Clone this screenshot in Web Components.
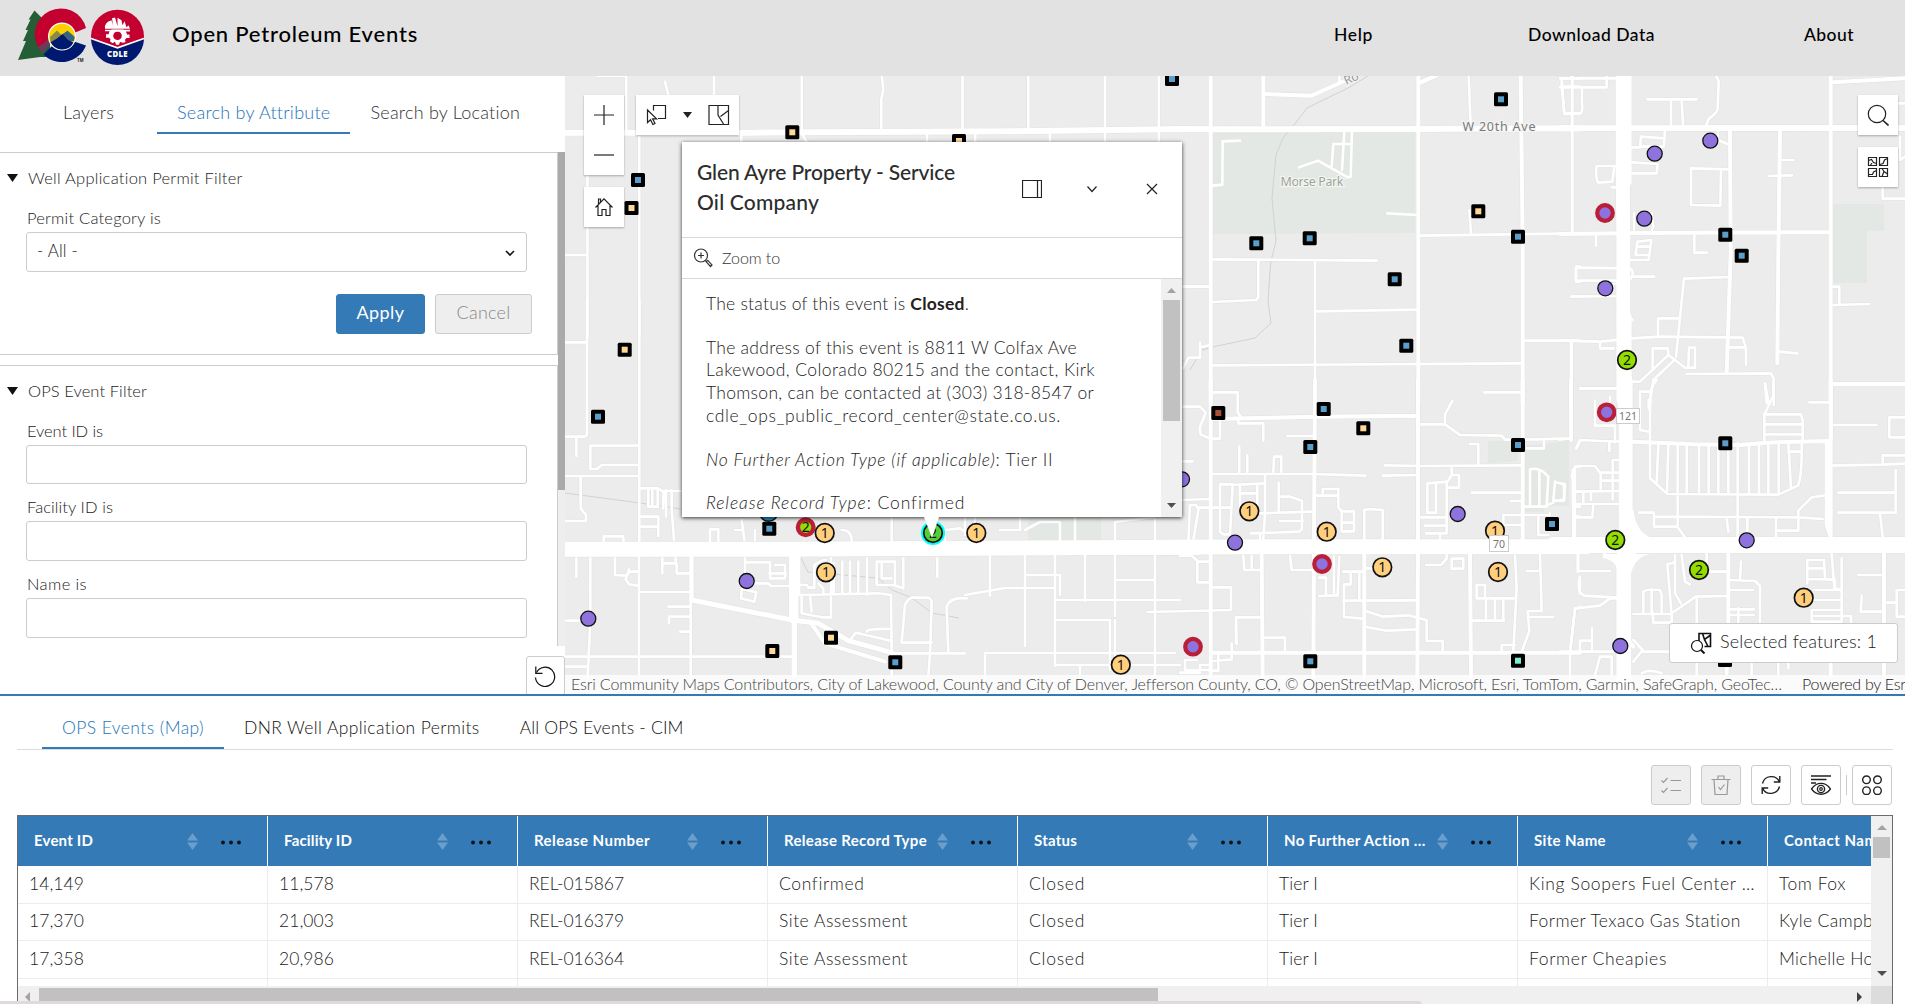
<!DOCTYPE html>
<html lang="en">
<head>
<meta charset="utf-8">
<title>Open Petroleum Events</title>
<style>
html,body{margin:0;height:100%;overflow:hidden;background:#fff}
body{font-family:Lato,"Open Sans","Liberation Sans",sans-serif;font-size:16px;color:#222;font-weight:300}
</style>
</head>
<body>
<ope-app></ope-app>
<script>
const make = (name, html, after) => customElements.define(name, class extends HTMLElement {
  connectedCallback() {
    if (this.shadowRoot) return;
    const root = this.attachShadow({mode: 'open'});
    root.innerHTML = typeof html === 'function' ? html(this) : html;
    if (after) after(this, root);
  }
});

/* Single line of text whose tracking is set so that it spans a given width. */
make('fit-text', `<style>:host{display:inline-block;white-space:nowrap}</style><span><slot></slot></span>`, (el, root) => {
  const w = +el.getAttribute('w');
  const n = el.textContent.length;
  if (w) el.style.letterSpacing = ((w - root.querySelector('span').getBoundingClientRect().width) / n).toFixed(3) + 'px';
});

make('ui-icon', el => {
  const S = {
    plus: [24, '<path d="M12 2v20M2 12h20"/>'],
    minus: [24, '<path d="M2 12h20"/>'],
    home: [20, '<path d="M1.500 10.500 10 1.800l8.500 8.700M4 8.500v10h4v-6h4v6h4v-10M4.500 7.500v-5.500h2v3.200"/>'],
    pick: [22, '<path d="M8.500 6.500v-5h12v13h-7.500M2.500 6v12.500l3-2.800 2.400 4.800 2.100-1.100-2.400-4.600h4z"/>'],
    mapsel: [22, '<path d="M1 1.500h19.500v19H1zM10 1.500v9.500l5.500 9M12.500 12.500l8-6"/>'],
    dock: [20, '<path d="M.500 1.500h19v17h-19zM15.500 1.500v17"/>'],
    chev: [12, '<path d="M1.500 3.500 6 8.500l4.500-5"/>'],
    close: [12, '<path d="M1 1l10 10M11 1 1 11"/>'],
    zoom: [20, '<circle cx="8" cy="7.500" r="6.500"/><path d="M8 4.500v6M5 7.500h6M12 12.500l1.500 1M13.200 13.800l1.500-1.500 4.300 4.600-1.500 1.600z"/>'],
    search: [22, '<circle cx="10" cy="10" r="8.700"/><path d="M16 16.500l5.500 5" stroke-width="1.600"/>'],
    base: [22, '<path d="M1.500 1.500h8v8h-8zM12.500 1.500h8v8h-8zM1.500 12.500h8v8h-8zM12.500 12.500h8v8h-8z"/><path d="M1.500 4.500l3-1 2 3 3 1M5 7l-1.500 2M13 8.500l3-1 1.500-3.500 3-1.500M2 18.500h3.500l1-2.500 3-1.500M15 12.500l2 3-2 5M17 15.500l3.500 2.500"/>'],
    reset: [22, '<path d="M2.500 7.500A9.600 9.600 0 1 1 1.500 12.500"/><path d="M1.800 1.500v6.800h6.700" />'],
    feat: [22, '<path d="M9 9V1.500h11.500v13h-6M12.500 1.500l2 6 5.500-4M14.500 7.500l3.500 7" stroke-width="1.600"/><circle cx="7" cy="14" r="5.500" fill="#fff"/><path d="M11 18l3.500 3.500" stroke-width="2"/>'],
    list: [20, '<path d="M.500 5.500l2 2 4-4.500M.500 15.500l2 2 4-4.500M9.500 5.500H20M9.500 15.500H20"/>'],
    trash: [20, '<path d="M.500 4.500h19M7 4V1h6v3M3 4.500 4 19.500h12l1-15M7.500 12l2 2.500 4-5"/>'],
    refresh: [20, '<path d="M18.500 7A9 9 0 0 0 1.500 8.500M1.500 13A9 9 0 0 0 18.500 11.500M18.800 1v6h-6M1.200 19v-6h6" stroke-width="1.400"/>'],
    eye: [20, '<path d="M0 1h20M0 4.500h15.500M0 8h5" stroke-width="1.500"/><path d="M.500 14c5-7.500 14-7.500 19 0-5 7-14 7-19 0z" stroke-width="1.400"/><circle cx="10" cy="14" r="3.600" stroke-width="1.400"/><circle cx="10" cy="14" r="1.300"/>'],
    dots4: [20, '<g stroke-width="1.400"><circle cx="4.500" cy="4.800" r="3.800"/><circle cx="15.500" cy="4.800" r="3.800"/><circle cx="4.500" cy="15.700" r="3.800"/><circle cx="15.500" cy="15.700" r="3.800"/></g>'],
    select: [10, '<path d="M1 3l4 4 4-4" stroke-width="1.600"/>']
  };
  const [vb, d] = S[el.getAttribute('name')];
  const s = el.getAttribute('size') || vb;
  return `<style>:host{display:block;flex:none;line-height:0}svg{fill:none;stroke:currentColor;stroke-width:1.200}</style>
  <svg width="${s}" height="${s}" viewBox="0 0 ${vb} ${vb}">${d}</svg>`;
});

make('ope-logo', `<style>:host{display:block;width:148px;height:66px}</style>
<svg width="148" height="66" viewBox="0 0 148 66">
  <path d="M34.500 10.500 28.500 19.500h2L25.500 30h2.500L23 41h3L18 60 40 57H50V30l-5-9z" fill="#245e36"/>
  <path d="M86 28A26 26 0 1 0 40 50L54 37H74V33z" fill="#c3002f"/>
  <path d="M86 45.500A26 26 0 0 1 43.500 54.500L57 41 74 41.500z" fill="#001970"/>
  <path d="M38 47 48.500 39.500 50 45 42 53z" fill="#6d3a5d"/>
  <circle cx="62" cy="36.500" r="14" fill="#fff"/><circle cx="62" cy="36.500" r="12.800" fill="#ffd100"/>
  <path d="M50.500 42 50 37l7-6.500 4.500 4.500 6-4.500 7 6-.5 4.500z" fill="#8a8b45"/>
  <path d="M61.500 35 67.500 31 74.500 37 74 41 66 42z" fill="#35647e"/>
  <path d="M50.300 42.500 57 38.500l5.500-4.500 5.500 6 5.500 2.500A12.800 12.800 0 0 1 50.500 42z" fill="#001970"/>
  <text x="77" y="61.500" font-family="Liberation Sans" font-size="4.500" font-weight="bold" fill="#222">TM</text>
  <g transform="translate(117.500 36.300)"><circle r="26.500" fill="#c3002f"/>
  <path d="M-26.400 2.200 0 11.500 26.400 2.200A26.400 26.400 0 0 1-26.400 2.200z" fill="#001970"/>
  <path d="M-26.400 2.200 0 11.500 26.400 2.200" fill="none" stroke="#fff" stroke-width="1.600"/>
  <path d="M-12.500-7.500Q-13.500-14-6-16l1.500 5-1-7 3-.8L0-10V-18.500L4-16l1 5 2-4 2 6 2-2 1.500 3.500z" fill="#fff"/>
  <path d="M-12.500-6.500h25v1.600h-4l1 3h2.500v3.500H9L7.500 3.500 8 6 5 6.500 2.500 5.500 1.500 8.500h-3L-2.500 5.500-5 7-7.500 5-7 3-8.500 1.500h-3v-3.500H-9l1-3h-4.500z" fill="#fff"/>
  <circle cy="-.5" r="4.300" fill="#c3002f"/><path d="M-6-6.800h12v2H-6z" fill="#fff"/>
  <text x="0" y="20.700" text-anchor="middle" font-family="Open Sans,Lato" font-size="7.800" font-weight="800" letter-spacing=".3" fill="#fff">CDLE</text></g>
</svg>`);

make('ope-header', `<style>
:host{display:flex;height:76px;background:#e2e2e2;color:#000;flex:none}
h1{margin:0 0 0 24px;padding-top:18px;font-size:22px;line-height:32px;font-weight:500}
nav{margin-left:auto;display:flex;padding:23px 51px 0 0;font-size:17.500px;line-height:24px;font-weight:500}
nav fit-text + fit-text{margin-left:155px} nav fit-text:last-child{margin-left:149px}
</style><ope-logo></ope-logo><h1><fit-text w="246">Open Petroleum Events</fit-text></h1>
<nav><fit-text w="39">Help</fit-text><fit-text w="127">Download Data</fit-text><fit-text w="50">About</fit-text></nav>`);

make('filter-field', el => `<style>
:host{display:block;margin:16px 30px 0 26px}
:host([next]){margin-top:11px}
label{display:block;padding-left:1px;line-height:24px;font-size:16.500px}
.box{display:flex;align-items:center;justify-content:space-between;margin-top:2px;height:39.700px;box-sizing:border-box;border:1px solid #ccc;border-radius:3px;background:#fff;padding:0 11px 2px 10px;font-size:17px}
ui-icon{margin-top:4px;color:#111}
</style><label><fit-text w="${el.getAttribute('w')}">${el.getAttribute('label')}</fit-text></label>
<div class="box"><slot></slot>${el.hasAttribute('select') ? '<ui-icon name="select"></ui-icon>' : ''}</div>`);

make('filter-card', el => `<style>
:host{display:block;border:1px solid #ccc;border-left:0;width:557px;box-sizing:content-box}
h2{margin:0;padding:13px 0 0 7px;display:flex;align-items:center;gap:10px;font-size:16.500px;font-weight:inherit;line-height:24px}
h2 svg{display:block}
</style><h2><svg width="11" height="8"><path d="M0 0h11L5.500 8z" fill="#111"/></svg><fit-text w="${el.getAttribute('w')}">${el.getAttribute('label')}</fit-text></h2><slot></slot>`);

make('filter-panel', `<style>
:host{display:flex;flex-direction:column;width:565px;height:618px;flex:none;background:#fff;overflow:hidden}
.tabs{display:flex;height:76px;padding-left:43px;flex:none;font-size:18px;line-height:24px;color:#333}
.tab{height:32px;padding:24px 20px 0;border-bottom:2px solid transparent}
.first{margin-right:23px}
.on{color:#2474b8;border-color:#347ab7}
.body{display:flex;height:494px;flex:none}
.cards{width:558px;height:494px;overflow:hidden}
.bar{width:7px;background:#eee}.bar i{display:block;height:338px;background:#aaa}
.row{display:flex;justify-content:flex-end;gap:10px;margin:22px 25px 20px 0}
.btn{box-sizing:border-box;height:40px;border:1px solid #347ab7;border-radius:3px;background:#347ab7;color:#fff;font-size:18px;font-weight:400;line-height:35px;width:89px;text-align:center}
.btn.c{width:97px;background:#eee;border-color:#ccc;color:#888;font-weight:300}
filter-card+filter-card{margin-top:10px;height:300px}
.foot{display:flex;justify-content:flex-end;padding-top:10px}
.reset{width:39px;height:40px;box-sizing:border-box;border:1px solid #ccc;border-radius:3px;display:flex;justify-content:center;padding-top:8px;color:#111}
.reset ui-icon{margin-left:-2px}
</style>
<div class="tabs"><div class="tab first"><fit-text w="51">Layers</fit-text></div><div class="tab on"><fit-text w="153">Search by Attribute</fit-text></div><div class="tab"><fit-text w="150">Search by Location</fit-text></div></div>
<div class="body"><div class="cards">
<filter-card label="Well Application Permit Filter" w="215">
  <filter-field label="Permit Category is" w="134" select><fit-text w="41">- All -</fit-text></filter-field>
  <div class="row"><div class="btn"><fit-text w="48">Apply</fit-text></div><div class="btn c"><fit-text w="54">Cancel</fit-text></div></div>
</filter-card>
<filter-card label="OPS Event Filter" w="119">
  <filter-field label="Event ID is" w="76"></filter-field>
  <filter-field next label="Facility ID is" w="86"></filter-field>
  <filter-field next label="Name is" w="60"></filter-field>
</filter-card></div><div class="bar"><i></i></div></div>
<div class="foot"><div class="reset"><ui-icon name="reset"></ui-icon></div></div>`);

/* Road network. Each tile holds polylines in its own units: [origin x, origin y, scale x, scale y, {width: path}] */
const TILES = [
 [565,70,2.45,3,{
  3:'M80 18H150V190M245 35l8 40M365 18V90M182 200V800M55 190V800M0 555h55M580 18V190l12 26M776 18l4 40-5 30V180M974 18V180M1135 18V180M1323 18V216M1455 18V216M432 190v30M887 190v30M1005 190v30M1188 190v30M1512 648h60',
  6:'M0 188H450L1100 184 1568 176'}],
 [565,300,3,3,{
  3:'M66 0V400q0 10-10 10H0M0 127H66M223 0V725M34 412v56M0 528H220M47 530V625l16 20v18H0M76 437H220M76 437v70h20l14-12H220M228 565h50l15 8h57M250 565v35l0 20h28V565M262 565v50M296 575l-2 50M320 570v60l7 90M303 570v80M228 650h52v58M228 680h52M116 725v-16h58l2 16M435 723v-35h25v35M530 660l8 60M510 690h25M570 690v30M830 690q30 0 30 33M980 655v70M1140 725v-35l45-5 15 10M34 775v55M76 775V965L68 1130M0 962H75M0 1070H690M222 770V1125M150 775v50l35 2 10-12h25M182 838l10-30M182 838l10 15 30 5M292 775v45M292 790h40v-15M335 790v30h40M377 770V1125M228 876H377M310 920h67M312 970v-20h65M345 995h32M540 775v60M540 787h75v48M613 820h50l-4 15-43 0M550 850h60l8 8h70M530 870l-2 25 40 10 6-28-44-10M0 1100h68M692 885H720M710 885v55l60 12h28V775M735 885l5 50M700 855h25l5 8h18v-68q20-15 35-15M760 850l15 15v15M806 790v95M832 785v95M855 785v95M880 785v95M906 775v110M705 885 940 880 978 885 980 1060M935 785v70h55V785h-55M950 785v50h30M985 855l30 10v-90M1117 775v55M1010 1028l10-115q15-25 30-20h40q10 5 10 15L1095 1060 1090 1130M1010 1028H1100M1150 1060 1145 920q10-30 60-25M855 1020l18-22 108 25M905 995q0-10 75-8M980 1060H1200M980 1060v70M630 795h30v25',
  5:'M380 900 680 960 760 970 850 1022 980 1058',
  4:'M735 965 780 1030 960 1085M380 900V770',
  7:'M690 770V960',
  '5.5':'M688 960V1125M680 770v190M698 770v110',
  15:'M-10 748H650L900 746 1900 742'}],
 [1180,70,3,3,{
  3:'M478 18v22M97 347l30-3 1-130 52-2M357 292l57-20 90 50 8-2 4-135M455 290l5-68h55M486 300l7-115M622 430l92 5M868 420l5 70M720 497 1200 490M98 568 590 572M235 570v112l-6 8L98 696M405 572V960M410 724 714 719M98 886 1022 880M1034 812H1200M1173 810V1000M1174 680h26M1188 590v45h12M1188 590h12M1145 25l8 105h47M1145 50h55M1140 25h60M1145 25V50M1176 18V490M8 650H90M10 895l15-32h35v-45M62 832l32-8M866 18l6 150',
  4:'M92 18V1000M250 18V170M258 72 395 77 500 30M715 18V1000M720 38 770 16M1022 18l6 500V1000',
  6:'M-20 178 700 177 1200 175'}],
 [1560,70,3,3,{
  3:'M37 18V490M0 25h165M0 52h140V20M5 52l8 80h45q12-5 8-30V55M262 88h148M333 90v75M365 90l4 75M468 18l8 15-3 85q-3 10-28 30l-7 20M215 232h25l3-32 70 5-2 25h-70M314 185v20M215 277l78 5-3 28h-75M474 185v25l35 15M393 295l115 3M393 295v110l88 2 2-105M668 270h32M628 318l68-2M165 288h-55q-5 35 5 50l42-3 6-45M155 352h30M222 430v50M275 430l5 40-5 12M108 495v33M232 515l42-5-8 60H205M232 515l-5 40h42M230 530h40M403 492v56h38M48 593l155 2q15 0 15 15-3 20-15 22H48zM218 620h65M35 680 180 678M180 640l-40 5M372 626l138-5M372 626 348 860M294 745v55M294 745h62M0 812 120 815 215 805 298 800 548 803 558 835v50M505 832h52M120 820v15h42M278 835v60M278 835h45l2 20M325 855l50 38h30v-60h-18l-2 55M345 868 280 930 270 1000M325 855 240 935H215M380 912l253-2 8 15v80M615 940l5 60M656 845l56 5M820 650h18v53M820 705l108-3M968 350v36h67M60 955h120M35 812v190M1020 200v70l15-10M1035 100h-20',
  4:'M510 180 512 550 500 910M660 180 655 550 652 880M0 492 260 489 810 486M812 18V1000M820 37 1035 25M820 943h215',
  6:'M0 175 1035 174',
  '14':'M188 0V300L190 480V990M194 740v270'}],
 [1180,380,3,3,{
  3:'M98 37h75v60l12 18M175 115v15h75v52M322 168h80M178 200v75M202 225v50M280 275l2-45h22v45M0 80h60l17 18-18 45 3 20 28 13h30v-60M0 244h38M0 360 90 357M98 282 400 282 556 287M30 375l-5 110M30 375h18l8 10-15 90M52 383h100M120 315v140l10 8 20 0 8-150h-38M155 315l100-5M180 315v80M180 340h50M232 315v80H180M255 285v115l-5 75M240 400l158-5M296 308v88M296 350h35l35 12v85l-8 8-145 5M300 423h68M240 480v-20M410 347h65v-20h-47v18M475 347v35l10 12h37v60h-37v-62M485 428h37M553 480V390q5-5 55 0v90M615 256 720 258 1025 256M608 287 712 285M720 133h75v-30l22-40M795 133l45 32 125 2 10 12 100-1 95-3M912 37h116M870 192h25v60M1040 205h52v-28M815 265v20l-13 20-60 5v88h26v-88M800 305v155h-62M837 285v38H803M815 285h22M875 338H1025M722 412h78M735 437h65M780 460v18M992 363h36M1050 270v110h50l5-90q-25-30-55-22M1078 270v110M1125 305l-5 57h32l3-50-30-5M1034 380h56l30-12M970 405h140v-5M970 405v30h50M1075 410v55h30M1185 260v215M1175 290l10-30h15M1185 335h15M1185 380h15M1185 410h15M190 528l3 42h48M215 528v40M330 528l5 42h65M0 527h35l20 18h35M52 545v62h38M98 622h55v68l-250 6M168 790v-78h78M168 712l2 80M250 773h65v45M418 648l55-2 5-115M418 593h20v52M462 530v110M490 575h60M512 575v38h-20v98l58 5M538 575v85M490 662l225-1M555 692l55 18 75-4 55 15v62h48v35M555 740l65 12 92-4M555 565h28M738 555h45l17-20v-10M815 536h35v30h-35zM1005 528l5 95-10 190M890 615h25v40h-25zM890 655h112M918 655v65M945 655v65M970 655v65M875 722h97M1005 795h-40v20M1080 525l5 168h-42l5 60-22 60M1043 711h77M1040 573h40M1193 525v50M1200 590q-8 25 0 50M1200 680l-15 8-15 130v80M155 790v48l-55 5M115 820v52H90M15 870v-30h35M20 870h65M60 870v-15h30M0 878h60M1190 205l10-22',
  4:'M92 0V890M405 0 402 480 400 890M98 117 405 110 712 107M714 0V480L712 890M1028 0V480M1173 0V180M245 525 248 890M553 525V890M870 525 873 890M95 818H1200',
  15:'M-70 502 300 500 1220 500'}],
 [1560,380,3,3,{
  3:'M33 0V175l-35 4M60 25h118M105 62v75h60v50M150 50v45M48 205l12-25 60 3 100 3M148 185v28M40 470l-2-200 12-12 55 0 15 20h55M122 278v50M122 302h55M158 358V240h15M40 335l140-2M70 335v35M93 335v25M40 372h140M100 372l-3 40H40M0 310l12 5v45H0M240 35h28M240 35v115l28 5M290 0q-20 20-20 60V295l52 47 333 2 60-28q12-40 10-125M295 195l-5 112M325 195l-4 140M353 195v150M380 195v148M417 195v148M446 195v148M475 195v148M505 195v148M533 190v150M567 195v148M597 195v148M625 195v148M656 195v148M685 190l8 135M685 215h38M613 100v85M613 103h110l5 20v65M613 133h112M613 163h112M641 0v45L615 100M615 10l12 65M748 67h60M820 135h130M1035 112h-47v60h47M805 257l163-3v-28h67M968 254l67-3M835 338h172M1007 270v128H835M960 400l8 70M237 398h45v42h70l22 30M285 410l430 2 73 5M353 345v90M533 340v130M715 412v-20l40-40 45-6M715 412v40h-67M648 412v60M500 415l5 40M562 415v50M55 525v48h95M60 592v45l12 10 100 6M172 655h-22l-30 22-75 8-15 130M96 745v65M60 812v-30h35M120 830l-15 55M120 830h35v55M365 525l10 80 15 8M345 525v115l18 30M340 548l-18 5 13 150v25h-55l-2-30M250 700v-65q10-10 50-5l5 15v55M275 628v70M220 702h112l75-52 93-2M410 650v80M440 520v55h60M543 545l-3 50M510 600l75 3 15 15v110M510 630h68M510 688h72M510 705h72M535 685v45M742 610v-70h50l3 55M742 565h50M742 597l83 2v28M815 520l8 105 22 5H760M760 660h85M845 535v190M755 690h90M755 690v35h85M755 708h118v20M895 585h75M905 647l-3 48h70M1035 630h-25v80h25M972 668h35M0 815H160M220 780l28 30-28 35M248 815h85M245 880q20-15 60 0M410 850v35M575 850v35M685 850v15M655 850v35',
  4:'M268 60v25M220 185 400 193 540 195 620 188 805 183M812 0V470M800 185v250l12 35M505 520v210M972 520V885M813 0V180M820 12h215M500 850v30M812 850v35M205 780l15 20',
  14:'M197 0V480M190 540V900',
  16:'M-20 495 1040 495',
  12:'M200 480h20M185 510h30'}],
 [965,500,1,1,{
  3:'M0 15v20M10 38v-22M35 30h20V17M60 30l15-8h20v18M110 17v25M150 40V22l40-5M190 20v20M0 95 40 88H90M25 56v40M60 56v90M60 75h35v20M90 56v110M90 100h125M90 120h55v50M120 56v45M150 56v60M150 80h40M190 56V194M90 165H215M20 153h190M20 153v40M115 166v28M150 120v46'}]
];
const AREAS = '<path d="M1213 132H1415V233L1213 234z"/><path d="M1833 204h51v27h-17v52h-34z"/><path d="M1488 441h30v20l-30 2zM1524 446l45-5v65h-25v6h-20z"/><path d="M1028 517h73v24h-73z" />';
const WATER = 'M565 493 640 503 681 509M800 556l8 16 70 6 14 12 20 8 20 15 27 5M1368 76l-20 12-41 20-13 17-11 13-7 17-4 43 4 43-5 20-1 10-2 30 3 22-16 15-38 8-15 4-12 20M1183 360q-25 25-62 40M1180 358l-80 60';
const SQ = {b:[[638,180],[1172,79],[598,416.700],[769.300,528.700],[895.300,662.300],[1501,99.300],[1518,236.700],[1256.300,243.300],[1309.700,238.300],[1394.700,279.300],[1406.300,345.700],[1725.300,234.700],[1741.700,255.700],[1323.700,409],[1310.300,447],[1518,445],[1552,524],[1310.300,661.300],[1725.300,443.300],[1725,660]],
  t:[[631.500,208],[792.300,132.300],[959,141],[624.700,349.700],[831,637.700],[772.300,651],[1478.300,211.300],[1363.300,428.300]], r:[[1218.300,413]], m:[[1518,660.700]]};
const SQC = {b:'#5a9fcb',t:'#ffd797',r:'#a94f33',m:'#7defd0'};
const PURPLE = [[746.700,581],[588.300,618.700],[1654.700,153.700],[1710.300,140.700],[1644.300,218.700],[1605.300,288.300],[1182,479.300],[1235,542.700],[1457.700,514],[1746.700,540.300],[1620.300,646]];
const RING = [[1605,213],[1322,564],[1193,646.700],[1606.700,412.300]];
const ONE = [[824.700,533],[826,572.300],[976.300,533],[1249.300,511.300],[1326.700,531.700],[1382.300,567.300],[1495,530.700],[1498,572],[1803.700,597.700],[1120.800,664.700]];
const TWO = [[1627,360],[1615.300,540],[1699,570]];

make('map-canvas', () => {
  const roads = (dx, col) => TILES.map(([x, y, sx, sy, g]) => `<g transform="translate(${x} ${y}) scale(${1/sx} ${1/sy})">` +
    Object.keys(g).map(w => `<path d="${g[w]}" stroke="${col}" stroke-width="${+w + dx - (+w === 3 ? .4 : 0)}"/>`).join('') + '</g>').join('');
  const num = (x, y, n, f, ex = '') => `<circle cx="${x}" cy="${y}" r="9.300" fill="${f}" stroke="#111" stroke-width="1.700" ${ex}/><text x="${x}" y="${y + 5}">${n}</text>`;
  return `<style>:host{display:block;line-height:0}
  .r path{fill:none;vector-effect:non-scaling-stroke;stroke-linecap:round;stroke-linejoin:round}
  text{font:14px "Noto Sans","Open Sans",sans-serif;text-anchor:middle;fill:#111}
  text.l{fill:#7a7a7a;stroke:#f4f4f4;stroke-width:2.500px;paint-order:stroke}</style>
  <svg width="1340" height="618" viewBox="565 76 1340 618">
  <rect x="565" y="76" width="1340" height="618" fill="#ececec"/><g fill="#e3e8e4">${AREAS}</g>
  <path d="${WATER}" fill="none" stroke="#cfd3d3"/>
  <g class="r">${roads(1.200, '#e3e4e2')}${roads(0, '#fff')}
  <path d="M1618 76V180L1622 190M1630 76V183L1625 190M1625 310l7 10M1625 310l-7 10" stroke="#fff" stroke-width="3"/></g>
  <path d="M1633 508q3 26 20 30h-50v20q14 2 15 16v120h13V574q4-18 20-20h-45v-16h20z" fill="#fff"/>
  <text class="l" x="1499" y="131" style="font-size:12.500px" textLength="73">W 20th Ave</text>
  <text class="l" x="1312" y="186" style="font-size:12.500px;fill:#9da596" textLength="63">Morse Park</text>
  <text class="l" x="1353" y="82" style="font-size:12px;fill:#999" transform="rotate(-25 1353 82)">Ro</text>
  ${Object.keys(SQ).map(k => SQ[k].map(([x, y]) => `<rect x="${x - 7}" y="${y - 7}" width="14" height="14" rx="1.500" fill="#000"/><rect x="${x - 3}" y="${y - 3}" width="6" height="6" fill="${SQC[k]}"/>`).join('')).join('')}
  ${PURPLE.map(([x, y]) => `<circle cx="${x}" cy="${y}" r="7.500" fill="#8e72de" stroke="#111" stroke-width="1.300"/>`).join('')}
  ${RING.map(([x, y]) => `<circle cx="${x}" cy="${y}" r="7.800" fill="#8e72de" stroke="#ba1f38" stroke-width="4.200"/>`).join('')}
  <circle cx="768.700" cy="512" r="9.300" fill="#1b8fc0" stroke="#111" stroke-width="1.500"/>
  <circle cx="805.700" cy="527.300" r="7.800" fill="#93de00" stroke="#ba1f38" stroke-width="4.400"/><text x="805.700" y="532">2</text>
  ${ONE.map(([x, y]) => num(x, y, 1, '#ffcf7e')).join('')}${TWO.map(([x, y]) => num(x, y, 2, '#93de00')).join('')}
  <circle cx="933" cy="533" r="11" fill="none" stroke="#0ff" stroke-width="2.200"/>${num(933, 533, 2, '#55cc3a')}
  <g fill="#fff" stroke="#ccc"><rect x="1489.500" y="535.500" width="19" height="16"/><rect x="1616.500" y="408.500" width="23" height="15"/></g>
  <text x="1499" y="547.500" style="font-size:10.500px;fill:#777">70</text><text x="1628" y="420" style="font-size:10.500px;fill:#777">121</text>
  </svg>`;
});

make('map-popup', `<style>
:host{display:flex;flex-direction:column;width:500px;height:375px;background:#fff;box-shadow:0 1px 4px rgba(0,0,0,.8)}
header{display:flex;height:95px;border-bottom:1px solid #d8d8d8;flex:none}
h3{margin:0;padding:15px 0 0 15px;width:325px;box-sizing:border-box;font-size:21px;line-height:30px;font-weight:500;color:#2c2c2c}
h3 fit-text{display:block}
.i{display:flex;align-items:center;height:94px}
.act{display:flex;height:40px;border-bottom:1px solid #d8d8d8;flex:none;align-items:center;padding:0 0 0 11px;gap:9px;font-size:16px;color:#333}
.act fit-text{margin-top:-2px}
.main{display:flex;flex:1;min-height:0}
.text{width:479px;height:238px;overflow:hidden;box-sizing:border-box;padding:14px 0 0 24px;font-size:17.500px;line-height:22.860px}
p{margin:0 0 20.700px}p fit-text{display:block}
.sb{width:21px;background:#f0f0f0;display:flex;flex-direction:column;align-items:center;justify-content:space-between;box-sizing:border-box;padding:9px 0}
.sb i{width:17px;height:121px;background:#c1c1c1;margin-top:7px}.sb b{flex:1}
svg{display:block}
.tip{position:absolute;left:242px;top:375px}
b{font-weight:700}
</style>
<header><h3><fit-text w="258">Glen Ayre Property - Service</fit-text><fit-text w="122">Oil Company</fit-text></h3>
<div class="i"><ui-icon name="dock" style="margin-left:15px"></ui-icon><ui-icon name="chev" style="margin-left:44px"></ui-icon><ui-icon name="close" style="margin-left:48px"></ui-icon></div></header>
<div class="act"><ui-icon name="zoom"></ui-icon><fit-text w="58">Zoom to</fit-text></div>
<div class="main"><div class="text">
<p><fit-text w="263">The status of this event is <b>Closed</b>.</fit-text></p>
<p><fit-text w="371">The address of this event is 8811 W Colfax Ave</fit-text><fit-text w="389">Lakewood, Colorado 80215 and the contact, Kirk</fit-text><fit-text w="388">Thomson, can be contacted at (303) 318-8547 or</fit-text><fit-text w="355">cdle_ops_public_record_center@state.co.us.</fit-text></p>
<p><fit-text w="347"><i>No Further Action Type (if applicable)</i>: Tier II</fit-text></p>
<p><fit-text w="259"><i>Release Record Type</i>: Confirmed</fit-text></p></div>
<div class="sb"><svg width="9" height="5"><path d="M0 5h9L4.500 0z" fill="#a3a3a3"/></svg><i></i><b></b><svg width="9" height="5"><path d="M0 0h9L4.500 5z" fill="#505050"/></svg></div></div>
<svg class="tip" width="15" height="21"><path d="M0 0h15L8 21z" fill="#fff"/></svg>`);

make('ope-map', `<style>
:host{display:block;position:relative;width:1340px;height:618px;overflow:hidden}
.w{position:absolute;background:#fff;box-shadow:0 1px 2px rgba(0,0,0,.3);display:flex;align-items:center;justify-content:center;width:40px;height:40px}
map-popup{position:absolute;left:117px;top:66px}
.attr{position:absolute;left:0;bottom:0;width:1340px;height:19px;background:rgba(255,255,255,.8);display:flex;font-size:16px;line-height:17px;color:#444;white-space:nowrap;padding-left:6px;box-sizing:border-box}
.sel{position:absolute;left:1104px;top:547px;width:229px;height:40px;box-sizing:border-box;border:1px solid #ccc;border-radius:3px;background:#fff;display:flex;align-items:center;gap:8px;padding:0 0 4px 20px;font-size:18px}
.sel ui-icon{margin-top:4px;color:#111}
</style>
<map-canvas></map-canvas>
<div class="w" style="left:19px;top:19px;height:80px;flex-direction:column;gap:16px"><ui-icon name="plus"></ui-icon><ui-icon name="minus"></ui-icon></div>
<div class="w" style="left:19px;top:111px"><ui-icon name="home"></ui-icon></div>
<div class="w" style="left:71px;top:19px;width:103px;justify-content:flex-start"><ui-icon name="pick" style="margin-left:9px"></ui-icon><svg style="margin-left:16px" width="9" height="6"><path d="M0 0h9L4.500 6z" fill="#222"/></svg><ui-icon name="mapsel" style="margin-left:16px"></ui-icon></div>
<div class="w" style="left:1293px;top:19px"><ui-icon name="search"></ui-icon></div>
<div class="w" style="left:1293px;top:71px"><ui-icon name="base"></ui-icon></div>
<div class="attr"><fit-text w="1210">Esri Community Maps Contributors, City of Lakewood, County and City of Denver, Jefferson County, CO, © OpenStreetMap, Microsoft, Esri, TomTom, Garmin, SafeGraph, GeoTec…</fit-text><fit-text w="107" style="margin-left:20px;color:#222">Powered by Esri</fit-text></div>
<div class="sel"><ui-icon name="feat"></ui-icon><fit-text w="157">Selected features: 1</fit-text></div>
<map-popup></map-popup>`);

const COLS = [['Event ID',59],['Facility ID',68],['Release Number',116],['Release Record Type',143],['Status',43],['No Further Action …',142],['Site Name',72],['Contact Name',102]];
const ROWS = [
 [['14,149',55],['11,578',55],['REL-015867',95],['Confirmed',85],['Closed',56],['Tier I',39],['King Soopers Fuel Center …',226],['Tom Fox',67]],
 [['17,370',55],['21,003',55],['REL-016379',95],['Site Assessment',129],['Closed',56],['Tier I',39],['Former Texaco Gas Station',212],['Kyle Campbell',112]],
 [['17,358',55],['20,986',55],['REL-016364',95],['Site Assessment',129],['Closed',56],['Tier I',39],['Former Cheapies',138],['Michelle Howard',133]],
 [['',0],['',0],['',0],['',0],['',0],['',0],['',0],['',0]]];
make('data-grid', () => `<style>
:host{display:flex;flex-direction:column;width:1876px;height:190px;box-sizing:border-box;border:1px solid #6b6b6b;border-bottom:0;background:#fff;overflow:hidden}
.top{display:flex;height:169.500px;flex:none}
.vp{width:1853px;overflow:hidden}
.row{display:grid;grid-template-columns:repeat(8,250px);height:37.500px}
.h{height:50px;background:#347ab7;color:#fff}
.row>div{box-sizing:border-box;border-right:1px solid #ececec;border-bottom:1px solid #ececec;padding:5.500px 0 0 11px;line-height:24px;font-size:17.500px}
.row.h>div{display:flex;align-items:center;padding:0 26px 0 16px;border-right-color:#fff;border-bottom:0;font-size:15px;font-weight:700}
.h fit-text{margin-top:-2px}
.h svg{display:block;margin-left:auto}
.v{width:21px;background:#f0f0f0;display:flex;flex-direction:column;align-items:center;padding:9px 0 10px;box-sizing:border-box}
.v i{width:17px;height:21px;background:#c1c1c1;margin:7px 0 auto}
.hs{display:flex;flex:1;background:#f0f0f0}
.hs svg{margin:6px 8px 0 6px}.hs i{width:1119px;height:14px;margin-top:2px;background:#c1c1c1}
.hs em{width:21px;background:#dcdcdc}
</style><div class="top"><div class="vp"><div class="row h">${COLS.map(([t, w]) => `<div><fit-text w="${w}">${t}</fit-text><svg width="54" height="17"><path d="M0 7.500h11L5.500 0zM0 9.500h11L5.500 17z" fill="#6b9ecb"/><g fill="#111"><circle cx="36" cy="9.500" r="1.900"/><circle cx="44" cy="9.500" r="1.900"/><circle cx="52" cy="9.500" r="1.900"/></g></svg></div>`).join('')}</div>
${ROWS.map(r => `<div class="row">${r.map(([t, w]) => `<div>${t ? `<fit-text w="${w}">${t}</fit-text>` : ''}</div>`).join('')}</div>`).join('')}</div>
<div class="v"><svg width="10" height="5"><path d="M0 5h10L5 0z" fill="#a3a3a3"/></svg><i></i><svg width="10" height="5"><path d="M0 0h10L5 5z" fill="#505050"/></svg></div></div>
<div class="hs"><svg width="7" height="10"><path d="M6 0v10L1 5z" fill="#a3a3a3"/></svg><i></i><svg style="margin-left:auto" width="7" height="10"><path d="M1 0v10l5-5z" fill="#404040"/></svg><em></em></div>`);

make('results-panel', `<style>
:host{display:flex;flex-direction:column;height:308px;border-top:2px solid #347ab7;padding:0 12px 0 17px;background:#fff;width:1876px;position:relative}
.tabs{display:flex;height:53px;border-bottom:1px solid #dcdcdc;padding-left:25px;font-size:17.500px;line-height:24px;color:#111;flex:none}
.t{padding:20px 20px 0;height:31px;border-bottom:2px solid transparent}
.on{color:#2474b8;border-color:#347ab7}
.bar{display:flex;justify-content:flex-end;height:40px;margin:15px 0 10px;padding-right:1px;align-items:center;flex:none}
.b{width:40px;height:40px;box-sizing:border-box;border:1px solid #ccc;border-radius:3px;display:flex;align-items:center;justify-content:center;color:#222;margin-right:10px}
.off{background:#eee;color:#999}
.sep{width:1px;height:20px;background:#ccc;margin:0 5px 0 -5px}
.status{position:absolute;left:0;top:305px;width:1422px;height:4px;background:#e0dad9;border-radius:0 5px 0 0}
</style>
<div class="tabs"><div class="t on"><fit-text w="142">OPS Events (Map)</fit-text></div><div class="t"><fit-text w="236">DNR Well Application Permits</fit-text></div><div class="t"><fit-text w="164">All OPS Events - CIM</fit-text></div></div>
<div class="bar"><div class="b off"><ui-icon name="list"></ui-icon></div><div class="b off"><ui-icon name="trash"></ui-icon></div><div class="b"><ui-icon name="refresh"></ui-icon></div><div class="b"><ui-icon name="eye"></ui-icon></div><div class="sep"></div><div class="b" style="margin-right:0"><ui-icon name="dots4"></ui-icon></div></div>
<data-grid></data-grid><div class="status"></div>`);

make('ope-app', `<style>:host{display:flex;flex-direction:column;width:1905px;height:1004px;overflow:hidden}.m{display:flex;height:618px;flex:none}</style>
<ope-header></ope-header><div class="m"><filter-panel></filter-panel><ope-map></ope-map></div><results-panel></results-panel>`);
</script>
</body>
</html>
